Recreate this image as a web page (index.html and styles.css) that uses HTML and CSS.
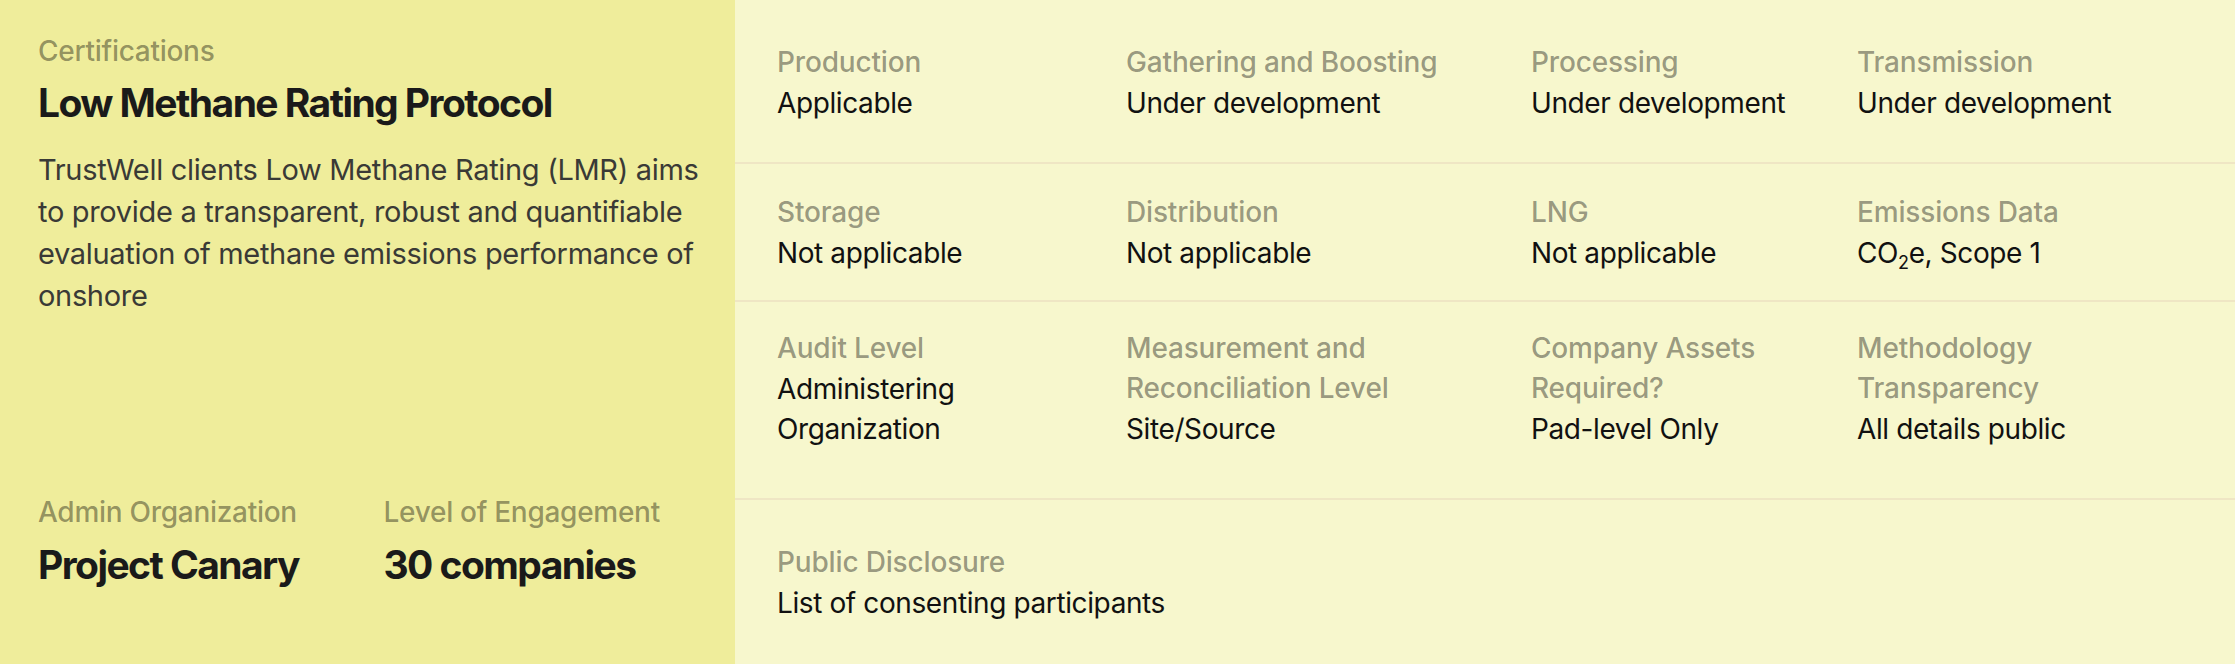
FILE: index.html
```html
<!DOCTYPE html>
<html lang="en">
<head>
<meta charset="utf-8">
<title>Low Methane Rating Protocol</title>
<link rel="stylesheet" href="styles.css">
</head>
<body>
<div class="card">
  <section class="intro">
    <div class="intro-top">
      <div class="intro-label">Certifications</div>
      <h1 class="title">Low Methane Rating Protocol</h1>
      <p class="desc">TrustWell clients Low Methane Rating (LMR) aims to provide a transparent, robust and quantifiable evaluation of methane emissions performance of onshore</p>
    </div>
    <div class="stats">
      <div class="stat">
        <div class="intro-label">Admin Organization</div>
        <div class="stat-value">Project Canary</div>
      </div>
      <div class="stat">
        <div class="intro-label">Level of Engagement</div>
        <div class="stat-value">30 companies</div>
      </div>
    </div>
  </section>
  <section class="details">
    <div class="row row-1">
      <div class="cell"><div class="label">Production</div><div class="value">Applicable</div></div>
      <div class="cell"><div class="label">Gathering and Boosting</div><div class="value">Under development</div></div>
      <div class="cell"><div class="label">Processing</div><div class="value">Under development</div></div>
      <div class="cell"><div class="label">Transmission</div><div class="value">Under development</div></div>
    </div>
    <div class="row row-2">
      <div class="cell"><div class="label">Storage</div><div class="value">Not applicable</div></div>
      <div class="cell"><div class="label">Distribution</div><div class="value">Not applicable</div></div>
      <div class="cell"><div class="label">LNG</div><div class="value">Not applicable</div></div>
      <div class="cell"><div class="label">Emissions Data</div><div class="value">CO<sub class="sub">2</sub>e, Scope 1</div></div>
    </div>
    <div class="row row-3">
      <div class="cell"><div class="label">Audit Level</div><div class="value">Administering Organization</div></div>
      <div class="cell"><div class="label">Measurement and Reconciliation Level</div><div class="value">Site/Source</div></div>
      <div class="cell"><div class="label">Company Assets Required?</div><div class="value">Pad-level Only</div></div>
      <div class="cell"><div class="label">Methodology Transparency</div><div class="value">All details public</div></div>
    </div>
    <div class="row row-4">
      <div class="cell cell-wide"><div class="label">Public Disclosure</div><div class="value">List of consenting participants</div></div>
    </div>
  </section>
</div>
</body>
</html>
```
FILE: styles.css
```css
* { box-sizing: border-box; }

html, body {
  margin: 0;
  padding: 0;
}

body {
  font-family: Inter, "Noto Sans", "Liberation Sans", sans-serif;
  background: #f7f7cd;
  color: #111;
}

.card {
  display: flex;
  height: 664px;
  overflow: hidden;
}

/* Left intro panel */
.intro {
  width: 735px;
  flex: 0 0 735px;
  background: #efed9b;
  padding: 34px 24px 76px 38px;
  display: flex;
  flex-direction: column;
  justify-content: space-between;
}

.intro-label {
  font-size: 28px;
  line-height: 34px;
  font-weight: 500;
  letter-spacing: -0.01em;
  color: rgba(0, 0, 0, 0.4);
}

.title {
  margin: 11px 0 0;
  font-size: 39px;
  line-height: 47px;
  font-weight: 700;
  letter-spacing: -0.04em;
  color: #1a1a1a;
}

.desc {
  margin: 23px 0 0;
  font-size: 29px;
  line-height: 42px;
  font-weight: 400;
  letter-spacing: -0.011em;
  color: #3a3a36;
}

.stats {
  display: grid;
  grid-template-columns: 1fr 1fr;
  column-gap: 18px;
}

.stat-value {
  margin-top: 12px;
  font-size: 39px;
  line-height: 47px;
  font-weight: 700;
  letter-spacing: -0.04em;
  color: #1a1a1a;
}

/* Right details panel */
.details {
  flex: 1 1 auto;
  background: #f7f7cd;
  display: flex;
  flex-direction: column;
}

.row {
  display: grid;
  grid-template-columns: 349px 405px 326px 1fr;
  padding-left: 42px;
  padding-right: 42px;
  border-bottom: 2px solid #efe6c4;
}

.row-1 { padding-top: 42px; padding-bottom: 39px; }
.row-2 { padding-top: 28px; padding-bottom: 27px; }
.row-3 { padding-top: 26px; padding-bottom: 49px; }
.row-4 { padding-top: 42px; padding-bottom: 41px; border-bottom: 0; flex: 1 1 auto; }

.cell {
  padding-right: 22px;
}

.cell-wide {
  grid-column: 1 / -1;
}

.label {
  font-size: 28px;
  line-height: 40px;
  font-weight: 500;
  letter-spacing: -0.006em;
  color: rgba(0, 0, 0, 0.4);
}

.value {
  margin-top: 1px;
  font-size: 28px;
  line-height: 40px;
  font-weight: 400;
  letter-spacing: -0.014em;
  color: #111;
}

.sub {
  font-size: 18px;
  line-height: 0;
  vertical-align: -6px;
}
```
